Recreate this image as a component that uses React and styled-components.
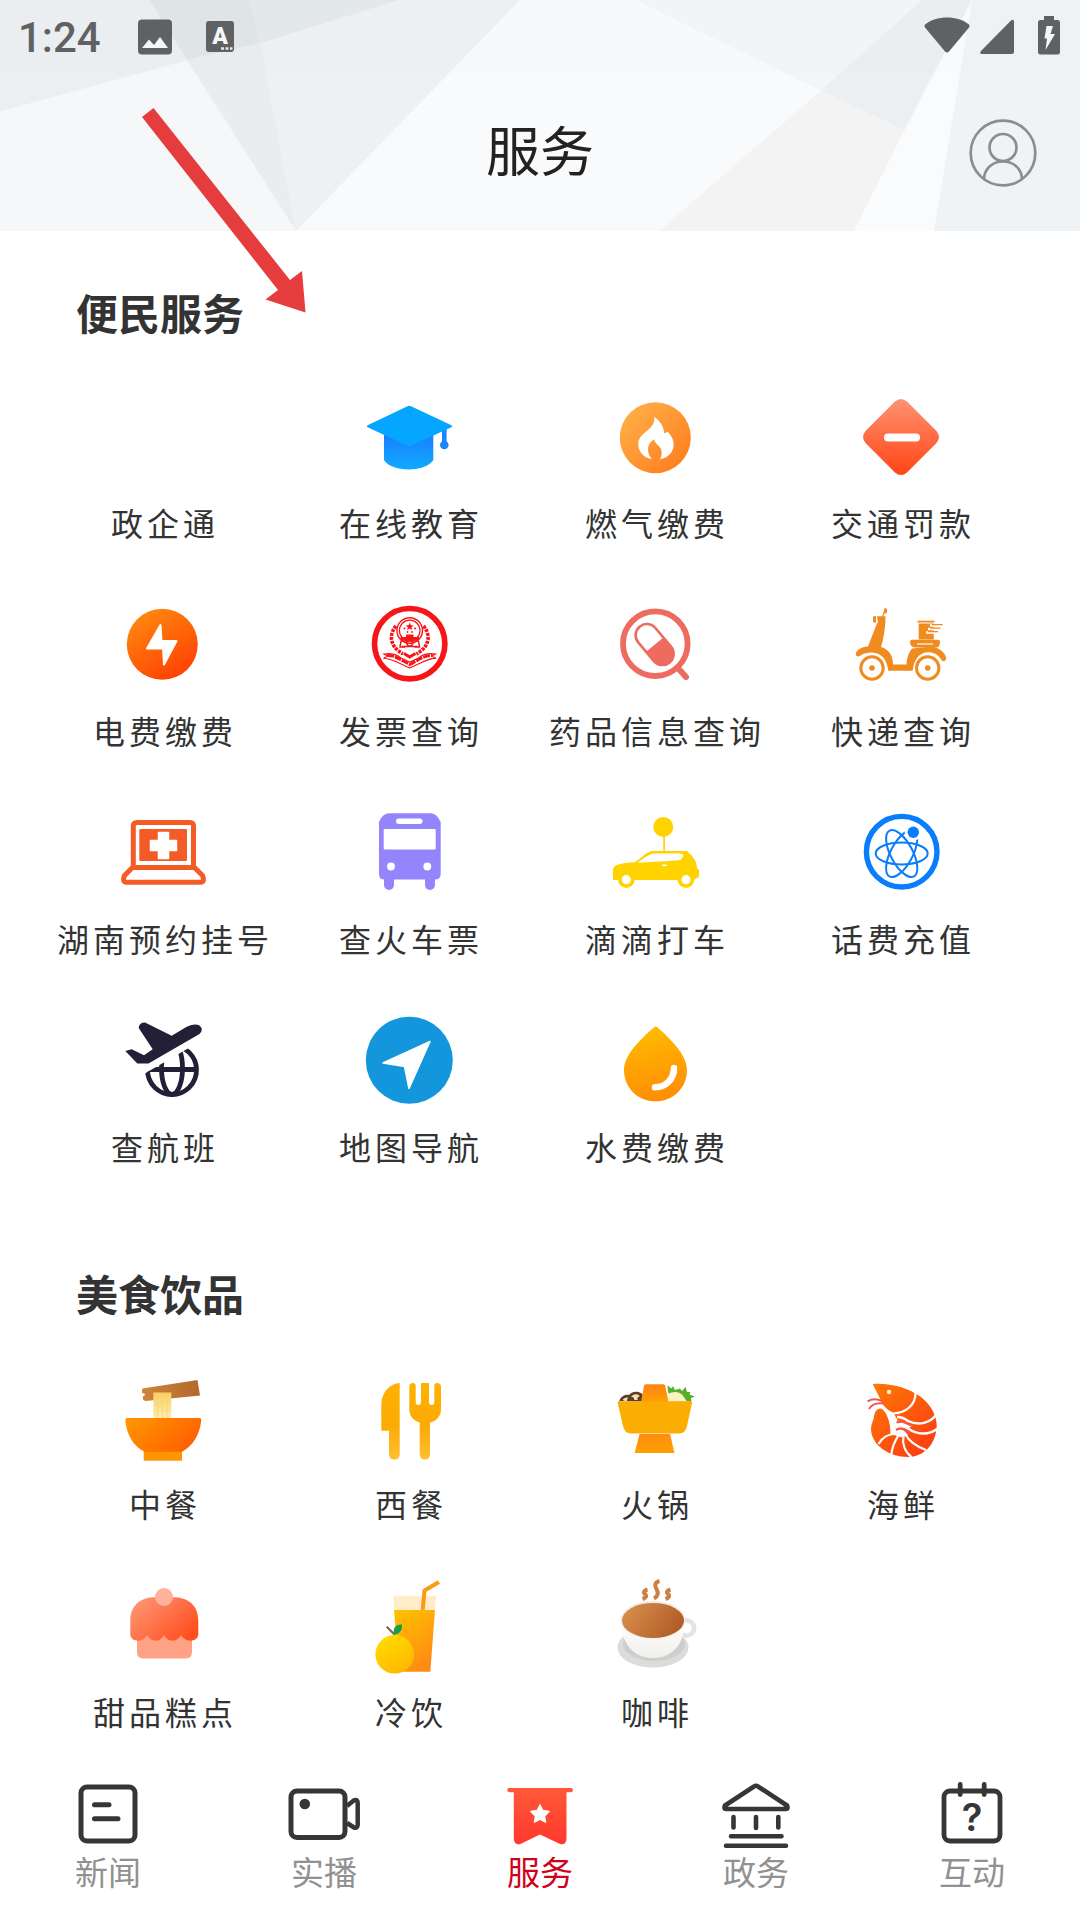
import React, { useState } from 'react';
import styled, { createGlobalStyle } from 'styled-components';

const GlobalStyle = createGlobalStyle`
    * {
        box-sizing: border-box;
    }
    body {
        margin: 0;
        background: #ffffff;
        font-family: 'Noto Sans CJK SC', 'Noto Sans', sans-serif;
        color: #333333;
    }
`

const Page = styled.div`
    display: flex;
    flex-direction: column;
    min-height: 100vh;
`

const Header = styled.header`
    position: relative;
    background: #f8fafc;
`

const HeaderArt = styled.svg`
    position: absolute;
    inset: 0;
    width: 100%;
    height: 100%;
`

const StatusBar = styled.div`
    position: relative;
    display: flex;
    align-items: center;
    justify-content: space-between;
    height: 74px;
    padding: 0 19px 0 18px;
    background: rgba(0, 0, 0, 0.005);
    color: #5f6162;
`

const StatusGroup = styled.div`
    display: flex;
    align-items: center;
    gap: ${props => props.$gap};
`

const Clock = styled.time`
    font-family: Roboto, sans-serif;
    font-size: 42px;
    font-weight: 500;
    line-height: 50px;
    padding-top: 2px;
    width: 86px;
`

const TitleBar = styled.div`
    position: relative;
    display: grid;
    grid-template-columns: 1fr auto 1fr;
    align-items: center;
    height: 157px;
    padding: 0 43px;
`

const Title = styled.h1`
    grid-column: 2;
    margin: 0;
    padding-bottom: 8px;
    font-size: 54px;
    font-weight: 400;
    line-height: 80px;
    color: #222222;
`

const ProfileButton = styled.button`
    justify-self: end;
    display: flex;
    padding: 0;
    border: none;
    background: none;
    color: #8d8d8f;
    cursor: pointer;
`

const Arrow = styled.svg`
    position: absolute;
    top: 100px;
    left: 130px;
    pointer-events: none;
    z-index: 2;
`

const Main = styled.main`
    flex: 1;
    display: flex;
    flex-direction: column;
    gap: 93px;
    padding-top: 51px;
`

const SectionTitle = styled.h2`
    margin: 0 0 50px;
    padding: 0 76px;
    font-size: 42px;
    font-weight: 700;
    line-height: 60px;
`

const Grid = styled.div`
    display: grid;
    grid-template-columns: repeat(4, 1fr);
    row-gap: 54px;
    padding: 0 55px 0 41px;
`

const Service = styled.a`
    display: flex;
    flex-direction: column;
    align-items: center;
    gap: 16px;
    color: inherit;
    text-decoration: none;
    white-space: nowrap;
`

const Icon = styled.svg`
    display: block;
    flex: none;
    width: ${props => props.$size};
    height: ${props => props.$size};
    overflow: visible;
`

const ServiceLabel = styled.span`
    padding-left: 2px;
    font-size: 32px;
    line-height: 48px;
    letter-spacing: 4px;
`

const TabBar = styled.nav`
    position: sticky;
    bottom: 0;
    display: flex;
    padding: 31px 0 28px;
    background: #ffffff;
`

const Tab = styled.button`
    flex: 1;
    display: flex;
    flex-direction: column;
    align-items: center;
    padding: 0;
    border: none;
    background: none;
    font-family: inherit;
    font-size: 33px;
    line-height: 42px;
    color: ${props => props.$active ? '#d0021b' : '#919191'};
    cursor: pointer;
`

/* gradient from (x1,y1) to (x2,y2) in box units */
function Gradient({ id, from, to, x1 = 0, y1 = 0, x2 = 0, y2 = 1 }) {
  return (
    <linearGradient id={id} x1={x1} y1={y1} x2={x2} y2={y2}>
      <stop offset="0" stopColor={from} />
      <stop offset="1" stopColor={to} />
    </linearGradient>
  )
}

const icons = {
  empty: null,
  education: (
    <>
      <Gradient id="cap" from="#1a7bff" to="#0fabff" />
      <path d="M19 40V68C22 73.500 32 77.500 43.700 77.500S65 73.500 68.300 68V40Z" fill="url(#cap)" />
      <path d="M79.300 36V53" stroke="#1a86ff" strokeWidth="4.600" />
      <circle cx="79.300" cy="53" r="4.300" fill="#1a86ff" />
      <path d="M42.500 14.200Q44.300 13.200 46.100 14.200L86.400 33.200Q88 34.200 86.400 35.200L46.100 53.800Q44.300 54.800 42.500 53.800L2.600 35.200Q1 34.200 2.600 33.200Z" fill="#04a6ff" />
    </>
  ),
  gas: (
    <>
      <Gradient id="gas" from="#ffb54d" to="#ff781a" x2={1} />
      <circle cx="44.3" cy="45.7" r="35.5" fill="url(#gas)" />
      <path d="M43.3 24.7C49 29 53 34 53 41C54.5 41 55.5 40.4 56.5 39.4C60 43 62.7 47.5 62.7 52.5C62.7 60 57 66 49 67.3C51.5 63 51.5 57 47.3 53.5C45 51.5 43.5 50 43 47.3C39.5 49.5 37 53 37 57.5C37 61.5 38.5 64.5 41 67.3C33 66 27.3 60 27.3 52C27.3 42 38 40 42 32C43.4 29.5 43.5 27 43.3 24.7Z" fill="#fff" />
    </>
  ),
  traffic: (
    <>
      <linearGradient id="fine" gradientUnits="userSpaceOnUse" x1="44" y1="7" x2="44" y2="83">
        <stop offset="0" stopColor="#ff9272" />
        <stop offset="1" stopColor="#ff4514" />
      </linearGradient>
      <path d="M38 9.5Q44 4.5 50 9.5L79.5 39Q84.5 45 79.5 51L50 80.5Q44 85.5 38 80.5L8.5 51Q3.5 45 8.5 39Z" fill="url(#fine)" />
      <rect x="27" y="41.5" width="36" height="8" rx="4" fill="#fff" />
    </>
  ),
  power: (
    <>
      <Gradient id="power" from="#ff8a10" to="#ff3d03" x1={0.2} x2={0.8} />
      <circle cx="43.3" cy="44.3" r="35.5" fill="url(#power)" />
      <path d="M41.5 25L42.500 41H57.500L45 64.500L44 48.500H28Z" fill="#fff" stroke="#fff" strokeWidth="2" strokeLinejoin="round" />
    </>
  ),
  invoice: (
    <g fill="none" stroke="#f8151a">
      <circle cx="44.7" cy="43.7" r="35.2" strokeWidth="5.6" />
      <circle cx="44.7" cy="30.5" r="12.8" strokeWidth="1.4" />
      <circle cx="44.7" cy="30.5" r="10.3" strokeWidth="1.2" />
      <path d="M44.7 22.5L45.9 25.3L48.7 25.5L46.5 27.3L47.3 30L44.7 28.5L42.1 30L42.9 27.3L40.7 25.5L43.5 25.3Z" fill="#f8151a" stroke="none" />
      <g fill="#f8151a" stroke="none">
        <circle cx="39.5" cy="28.5" r="1" />
        <circle cx="50" cy="28.5" r="1" />
        <circle cx="42.5" cy="32" r="0.9" />
        <circle cx="47" cy="32" r="0.9" />
        <path d="M41 34.5H48.5V37H54V40.500H35.500V37H41Z" />
      </g>
      <path d="M36 41H53.5M37 46.5H52.5" strokeWidth="1.6" />
      <circle cx="44.7" cy="43" r="3" strokeWidth="1.4" />
      <path d="M36 41L35 47H40M53.5 41L54.5 47H49.5" strokeWidth="1.5" />
      <path d="M31 26C24 34 24 46 38 54M58.5 26C65.5 34 65.5 46 51.5 54" strokeWidth="3.6" strokeDasharray="3 1" />
      <path d="M39 53.5L44.7 57L50.5 53.5" strokeWidth="3" />
      <path d="M19 54C26 53 31 54 36 58L44.7 62L53.5 58C58 54 63 53 70.5 54L67 56L71 58.500C64 58 58 62 44.7 68C31 62 26 58 18.5 58.500L22.5 56Z" strokeWidth="1.2" />
      <path d="M22 55.500C30 55 36 60 44.7 64.500C53 60 60 55 67.500 55.500" strokeWidth="3" strokeDasharray="7 1" />
    </g>
  ),
  medicine: (
    <>
      <g stroke="#ee6b60" fill="none">
        <circle cx="44.3" cy="43.7" r="32.3" strokeWidth="5.8" />
        <path d="M66.5 67.5L75 77" strokeWidth="6" strokeLinecap="round" />
      </g>
      <g transform="rotate(50 43.7 44.3)">
        <path d="M44 33.3H56a11.2 11.2 0 0 1 0 22.4H44Z" fill="#ee6b60" />
        <rect x="20.5" y="33.3" width="46.7" height="22.4" rx="11.2" fill="none" stroke="#ee6b60" strokeWidth="2.6" />
      </g>
    </>
  ),
  express: (
    <g fill="#f08b1f">
      <g fill="none" stroke="#f08b1f">
        <circle cx="15" cy="68" r="11.2" strokeWidth="3" />
        <circle cx="70.7" cy="68" r="11.2" strokeWidth="3" />
        <path d="M25.5 17L28 10" strokeWidth="1.2" />
      </g>
      <circle cx="15" cy="68" r="2.8" />
      <circle cx="70.7" cy="68" r="2.8" />
      <ellipse cx="28.5" cy="10.7" rx="1.7" ry="2.8" />
      <path d="M16 16.5L19 16V23L16 22Z" />
      <path d="M20 16.3H28.5C28.5 26 27 38 24 47C32 49 36 56 36 64.5H49.5C50 57 52 52 55 48.5L75 46.5C83 48 88.5 53 89.3 58.5Q87.5 63 84.5 60C81 54 76 52 70 52.3C62 53 57 60 55.7 70.7H31.3C30 60 25 53 15 52.5C9 52 5 54.5 1.5 56.5Q-2 56.5 -1 52.5C1 49 6 46.5 11 46.5L19.5 24.5L21 22Z" />
      <path d="M55 39.7H81Q83.5 40 83 43Q82.5 47.5 79 47.5H58Q53.5 47 53 42.5Q53 39.7 55 39.7Z" />
      <path d="M60 44H76" stroke="#fff" strokeWidth="1.2" />
      <rect x="60.5" y="20.7" width="17" height="1.8" />
      <rect x="61.7" y="23.5" width="15" height="16" />
      <path d="M73 25.5H86M71 29H84M69 32.500H80" stroke="#fff" strokeWidth="2.400" />
      <path d="M75 24.7H85.7M73 28.2H83.5M71 31.7H81" stroke="#f08b1f" strokeWidth="1.3" />
    </g>
  ),
  hospital: (
    <g fill="none" stroke="#f45c27" strokeWidth="5" strokeLinejoin="round">
      <path d="M14.3 58V18Q14.3 14.5 18 14.5H71Q74.5 14.5 74.5 18V58" />
      <path d="M13.5 59.5H75.5L83.5 67.5Q86 73.7 82 74.2H7Q3 73.7 5.5 67.5Z" />
      <rect x="20.3" y="21" width="47.7" height="32" rx="1" fill="#f45c27" stroke="none" />
      <path d="M39.5 24.5H49.5V32.5H57.5V42.5H49.5V50.5H39.5V42.5H31.5V32.5H39.5Z" fill="#fff" stroke="#fff" strokeWidth="1.5" />
    </g>
  ),
  train: (
    <>
      <g fill="#9585fc">
        <path d="M24 5.3H66Q72 6 75.7 14V66Q75.7 71.5 70 71.5H19Q14 71.5 14 66V14Q17 6 24 5.3Z" />
        <rect x="19" y="62" width="10" height="20" rx="5" />
        <rect x="60" y="62" width="10" height="20" rx="5" />
      </g>
      <g fill="#fff">
        <rect x="31" y="10.5" width="26.5" height="5.5" rx="2.7" />
        <rect x="18.7" y="21" width="52" height="20.5" rx="1" />
        <circle cx="26" cy="58.5" r="3.9" />
        <circle cx="62.3" cy="58.5" r="3.9" />
      </g>
    </>
  ),
  taxi: (
    <>
      <g fill="#ffd200">
        <circle cx="52.3" cy="19" r="10" />
        <rect x="52.3" y="28" width="1.6" height="16" />
        <path d="M2 72V62C2 57 9 55 24 54.3C31 49 36 44 41 43H76L78 45C83 49 86 55 86 60L88 62V69L84 71Q75 80 66 72H24Q15 80 7 72Z" />
        <circle cx="15.3" cy="71.7" r="8.2" />
        <circle cx="75" cy="71.7" r="8.2" />
      </g>
      <g fill="#fff">
        <path d="M26.5 54.8C33 50 38 46 43 45.5H68Q72.5 45.5 72.3 47.5C71 51 70 52 66 52.5C50 53.5 38 54 26.5 54.8Z" />
        <circle cx="15.3" cy="71.7" r="4.6" />
        <circle cx="75" cy="71.7" r="4.6" />
        <rect x="51" y="56.5" width="5" height="1.5" rx="0.7" />
      </g>
    </>
  ),
  phone: (
    <g fill="none" stroke="#0a7dfd">
      <circle cx="44.7" cy="43.7" r="35.3" strokeWidth="5.4" />
      <g strokeWidth="2">
        <ellipse cx="44.7" cy="45.5" rx="26" ry="11" />
        <ellipse cx="44.7" cy="45.5" rx="26" ry="11" transform="rotate(62 44.7 45.5)" />
        <ellipse cx="44.7" cy="45.5" rx="26" ry="11" transform="rotate(-62 44.7 45.5)" />
      </g>
      <circle cx="56.3" cy="24.3" r="8.5" fill="#fff" stroke="none" />
      <circle cx="56.3" cy="24.3" r="5.7" fill="#0a7dfd" stroke="none" />
    </g>
  ),
  flight: (
    <>
      <clipPath id="globe">
        <path d="M0 72.6L90 20.3V90H0Z" />
      </clipPath>
      <path d="M26 6.5L52.7 19.7L67.7 10.7Q76 7 80.5 9.5Q85 13.5 80.5 18L29.5 47.5H18.3L6.3 35L12.7 33.3L25 39.3L33.7 33.3L19.7 12Q20 6.5 26 6.5Z" fill="#231f36" />
      <g fill="none" stroke="#231f36" strokeWidth="4.8" clipPath="url(#globe)">
        <circle cx="53" cy="54" r="24.5" />
        <ellipse cx="53" cy="52" rx="10.5" ry="26.5" />
        <path d="M28 53.5H78" />
      </g>
    </>
  ),
  map: (
    <>
      <circle cx="44.3" cy="44.3" r="43.5" fill="#1496dc" />
      <path d="M65 25.5L18 47L39.5 50.5L44 72.5Z" fill="#fff" stroke="#fff" strokeWidth="1.5" strokeLinejoin="round" />
    </>
  ),
  water: (
    <>
      <Gradient id="water" from="#ffbf00" to="#ff8f05" x2={0.2} />
      <path d="M42.5 11.7Q44.7 9.5 47 11.7C58 22 76 38 76 54C76 72 62 85.3 44.5 85.3S13 72 13 54C13 38 31 22 42.5 11.7Z" fill="url(#water)" />
      <path d="M63 52C63 63 55 71 44 71.3" fill="none" stroke="#fff" strokeWidth="6.5" strokeLinecap="round" />
    </>
  ),
  chinese: (
    <>
      <Gradient id="stick" from="#cf843a" to="#b4682c" x2={1} y2={0} />
      <Gradient id="bowl" from="#ff9800" to="#ff6200" x2={1} y2={0.5} />
      <Gradient id="noodle" from="#fbcf62" to="#fdeeb0" />
      <path d="M23.5 15.5L78.5 7L81 22.5L26.5 28Q23 27 24 23.5L26.500 21.500L22.7 19.5Z" fill="url(#stick)" />
      <rect x="34.3" y="19.5" width="18" height="26" fill="url(#noodle)" />
      <path d="M38.5 20V45M43.3 20V45M48 20V45" stroke="#f8cd6a" strokeWidth="0.6" />
      <rect x="24.7" y="76" width="38.3" height="11.7" fill="#ff9500" />
      <path d="M8 45H80.5Q82.5 45 82.3 47C81 62 73 74 63 78.7H25.5C15 74 7.5 62 6.3 47Q6.3 45 8 45Z" fill="url(#bowl)" />
    </>
  ),
  western: (
    <>
      <linearGradient id="cutlery" gradientUnits="userSpaceOnUse" x1="0" y1="10" x2="0" y2="87">
        <stop offset="0" stopColor="#ffb200" />
        <stop offset="0.55" stopColor="#fcaa05" />
        <stop offset="1" stopColor="#ffc033" />
      </linearGradient>
      <g fill="url(#cutlery)">
        <path d="M34.7 10V81Q34.7 86.5 29.3 86.5T24 81V57.7H16.3V30.3C17 19 25 10.5 34.7 10Z" />
        <path d="M44.3 14Q44.3 10 48 10Q50.7 10 50.7 13V29Q50.7 32 53.4 32T56 29V10H64V29Q64 32 66.7 32T69.300 29V13Q69.300 10 72 10Q76 10 76 14V37C76 43 71 48.5 65 49.5V81Q65 86.5 60 86.5T54.7 81V49.5C49 48 44.3 43 44.3 37Z" />
      </g>
    </>
  ),
  hotpot: (
    <>
      <Gradient id="pot" from="#ff8412" to="#fda003" />
      <Gradient id="potBase" from="#ff8c12" to="#ffa200" />
      <path d="M8.3 28C10 22 16 21 18 22C22 17 31 18 33 24L32 28.5Z" fill="#5d4023" />
      <path d="M20 23.5Q25 19.5 29 23L26.5 24.5V27H23.5L22.5 24.5ZM11.5 27Q13 24 17 24.5L15.500 28.5Z" fill="#f5dfc4" />
      <path d="M57 19L56.5 12.500L60.500 15.500L62 13L64 17L69 15.5L71 18L74.5 14L76 19L79.5 19L78.5 21.5L84 23.500L80 25L80.5 28.5H62Z" fill="#57b02c" />
      <path d="M56.500 21Q65 17 71 21.500L76 28.5H56Z" fill="#fcf3c5" />
      <path d="M35 11.3H52.5Q54 11.3 54.3 13L57.5 29H30L33 13Q33.3 11.3 35 11.3Z" fill="url(#pot)" />
      <path d="M7.5 28.3H80.3Q81.3 28.5 81 30L76 53Q74.5 60.5 68 60.5H20.5Q13.5 60.5 12 53L6.7 30Q6.5 28.5 7.5 28.3Z" fill="#fbad03" />
      <path d="M28.5 61H59L63.5 80H23.7Z" fill="url(#potBase)" />
    </>
  ),
  seafood: (
    <>
      <Gradient id="shrimp" from="#ff7a05" to="#fb3a14" x2={0.9} />
      <path d="M15.7 11C32 9.5 52 15 64 24C74 32 80 43 79.7 53C79 72 66 84 51 84C32 84 15 72 14 57C14 50 17 47 17 43C18 37 22 34 25 36C31 41 33.5 51 34 61C38 62 41 63.5 46 64.5C42 60 39 55 38.5 46L34.7 39.5C28 35 25 31 23 25.5Z" fill="url(#shrimp)" />
      <path d="M24 32C31 40 34 51 33.5 61L46 64L51 62C46 56 41 53 40 46L36 39.5C31 38 27 35 24 32Z" fill="#fff" />
      <g fill="none" stroke="#fff" strokeWidth="2.2">
        <path d="M58.5 19C59 31 50 40 36 40.5" />
        <path d="M79 42C73 50 62 53 51 48Q46 44 40 44" strokeWidth="2.4" />
        <path d="M80 56C71 63 59 61 52 56Q45 51 40 55" strokeWidth="2.4" />
        <path d="M69 77C58 73 52 68 48 61" />
        <path d="M54.5 84C48 79 45 71 46.5 63" />
        <path d="M34.5 81C35 74 38 68 41 63" />
        <path d="M21.5 71C25 65 31 61 38 61" />
      </g>
      <path d="M41 47.500L56 52.500L52 55L40 52Z" fill="#fff" />
      <path d="M39.500 49.500C48 46.5 50 52 56 53M39 57C45 53.5 49 58 53 60" fill="none" stroke="#f4574b" strokeWidth="2.2" />
      <path d="M10.500 28.500Q17 24 26 28.5M12 36Q16 29 27 30.5" fill="none" stroke="#f4574b" strokeWidth="1.8" />
      <circle cx="32" cy="19" r="2.2" fill="#fff3d8" />
    </>
  ),
  dessert: (
    <>
      <Gradient id="cake" from="#ff9c7b" to="#ff4f20" x2={1} y2={0.7} />
      <path d="M18 54H73V71Q73 77.5 66.5 77.5H24.5Q18 77.5 18 71Z" fill="#ffa184" />
      <path d="M36 16.3H54C69 16.3 79.3 24 79.3 40V54Q78.5 59.7 71 59.7Q64 58.5 62 54Q59 59.7 53.5 59.7T45 54Q42 59.7 36.5 59.7T28 54Q25 59.7 19.5 59.7Q12 59.5 11.3 54V40C11.3 24 22 16.3 36 16.3Z" fill="url(#cake)" />
      <circle cx="45" cy="16" r="9" fill="#ffb19b" />
    </>
  ),
  drinks: (
    <>
      <Gradient id="juice" from="#fdc400" to="#ff8c12" x2={0.5} />
      <Gradient id="orange" from="#ffe000" to="#ffb700" x2={0.7} />
      <path d="M28.3 14.7H71L70 30H29Z" fill="#ffedc9" />
      <path d="M29 29H70L65.3 90.7H34Z" fill="url(#juice)" />
      <path d="M57.7 29L59.500 9.500L74 1" fill="none" stroke="#f99d10" strokeWidth="4" strokeLinejoin="round" />
      <circle cx="29.7" cy="73.3" r="19.3" fill="url(#orange)" />
      <path d="M21.7 45.7L29.5 53.5" stroke="#86634a" strokeWidth="2.2" />
      <path d="M29 54C27.5 46 31 43.5 37 43.5C37.5 50 34 53 29 54Z" fill="#14a04a" />
    </>
  ),
  coffee: (
    <>
      <Gradient id="coffee" from="#db9350" to="#b35f28" x2={1} y2={0.4} />
      <Gradient id="cup" from="#ffffff" to="#f1f0ec" />
      <ellipse cx="42" cy="66.5" rx="35.5" ry="20" fill="#dcdcdc" />
      <ellipse cx="43" cy="63" rx="31" ry="17" fill="#cecece" />
      <circle cx="75.5" cy="47" r="7.7" fill="none" stroke="#e3e3e1" strokeWidth="4.6" />
      <path d="M10 39C10 62 22 77 42 77S74 62 74 39Z" fill="url(#cup)" />
      <ellipse cx="42" cy="39" rx="32.3" ry="19" fill="#f0ece5" />
      <ellipse cx="42" cy="39.5" rx="31" ry="17.500" fill="url(#coffee)" />
      <g fill="none" stroke="#cb8144" strokeWidth="4">
        <path d="M36.500 8.500Q31 10 34 13T31.500 18" />
        <path d="M48.500 0Q42 2 45.500 8T43 17.500" />
        <path d="M59.500 8.500Q54 10 57 13T54.500 18" />
      </g>
    </>
  ),
}

const tabIcons = {
  news: (
    <g fill="none" stroke="#363636" strokeWidth="5" strokeLinecap="round">
      <rect x="9" y="9" width="54" height="54" rx="6" />
      <path d="M22.5 26.7H37M22.5 40.7H46" />
    </g>
  ),
  live: (
    <g fill="none" stroke="#363636" strokeWidth="5" strokeLinejoin="round">
      <rect x="3" y="13" width="54" height="46.5" rx="6" />
      <path d="M59 28L66 22.3Q69.7 21 69.7 25V46.5Q69.7 50.5 66 49.5L59 45" strokeWidth="4.5" />
      <circle cx="16.8" cy="26" r="5.3" fill="#363636" stroke="none" />
    </g>
  ),
  service: (
    <>
      <Gradient id="flag" from="#ff5a38" to="#ff382e" />
      <path d="M5.5 10H67Q69 10 69 12T67 14.3H62.5V61Q62 67.5 56 66L36 56.5L16.5 66Q10.5 67.5 9.8 61V14.3H5.5Q3.2 14 3.2 12T5.5 10Z" fill="url(#flag)" />
      <path d="M36 27L38.8 32.5L45 33.5L40.5 38L41.5 44L36 41L30.5 44L31.5 38L27 33.5L33.2 32.5Z" fill="#fff" stroke="#fff" strokeWidth="1.5" strokeLinejoin="round" />
    </>
  ),
  gov: (
    <g fill="none" stroke="#363636" strokeWidth="4.6" strokeLinecap="round" strokeLinejoin="round">
      <path d="M34 8.5Q36 7 38 8.5L67 27.5Q68.5 31 66 31H6Q3.5 31 5 27.5Z" />
      <path d="M13.5 39V49.5M36 39V50M58.3 39V49.5M11 58.3H61.5M6 67.7H66" />
    </g>
  ),
  interact: (
    <>
      <g fill="none" stroke="#363636" strokeWidth="4.8" strokeLinecap="round">
        <rect x="8" y="13" width="56" height="50" rx="6" />
        <path d="M24.2 6.5V16.5M48.2 6.5V16.5" />
      </g>
      <text x="36" y="53" textAnchor="middle" fontFamily="Inter, sans-serif" fontSize="38" fontWeight="600" fill="#363636">?</text>
    </>
  ),
}

const sections = [
  {
    title: '便民服务',
    items: [
      { icon: 'empty', label: '政企通' },
      { icon: 'education', label: '在线教育' },
      { icon: 'gas', label: '燃气缴费' },
      { icon: 'traffic', label: '交通罚款' },
      { icon: 'power', label: '电费缴费' },
      { icon: 'invoice', label: '发票查询' },
      { icon: 'medicine', label: '药品信息查询' },
      { icon: 'express', label: '快递查询' },
      { icon: 'hospital', label: '湖南预约挂号' },
      { icon: 'train', label: '查火车票' },
      { icon: 'taxi', label: '滴滴打车' },
      { icon: 'phone', label: '话费充值' },
      { icon: 'flight', label: '查航班' },
      { icon: 'map', label: '地图导航' },
      { icon: 'water', label: '水费缴费' },
    ],
  },
  {
    title: '美食饮品',
    items: [
      { icon: 'chinese', label: '中餐' },
      { icon: 'western', label: '西餐' },
      { icon: 'hotpot', label: '火锅' },
      { icon: 'seafood', label: '海鲜' },
      { icon: 'dessert', label: '甜品糕点' },
      { icon: 'drinks', label: '冷饮' },
      { icon: 'coffee', label: '咖啡' },
    ],
  },
]

const tabs = [
  { id: 'news', label: '新闻' },
  { id: 'live', label: '实播' },
  { id: 'service', label: '服务' },
  { id: 'gov', label: '政务' },
  { id: 'interact', label: '互动' },
]

function HeaderBackground() {
  return (
    <HeaderArt viewBox="0 0 1080 230" preserveAspectRatio="none" aria-hidden="true">
      <path d="M0 111L187 60L296 230H0Z" fill="#f5f7f9" />
      <path d="M0 0H149L187 60L0 111Z" fill="#ebeff1" />
      <path d="M149 0H250L261 43L187 60Z" fill="#e0e5e8" />
      <path d="M250 0H400L261 43Z" fill="#e4e9eb" />
      <path d="M187 60L261 43L296 230Z" fill="#e9edef" />
      <path d="M261 43L400 0H520L296 230Z" fill="#eff0f3" />
      <path d="M635 0H922L821 90Z" fill="#f4f5f6" />
      <path d="M922 0H972L904 130L821 90Z" fill="#ebeff1" />
      <path d="M821 90L904 130L854 230H659Z" fill="#f3f3f4" />
      <path d="M972 0L934 230H854Z" fill="#fafbfd" />
      <path d="M972 0H1080V230H934Z" fill="#f0f3f5" />
    </HeaderArt>
  )
}

function App() {
  const [activeTab, setActiveTab] = useState('service')

  return (
    <Page>
      <GlobalStyle />
      <Header>
        <HeaderBackground />
        <StatusBar>
          <StatusGroup $gap="34px">
            <Clock>1:24</Clock>
            <svg width="34" height="36" viewBox="0 0 34 36" aria-hidden="true">
              <rect width="34" height="35" y="0.5" rx="4" fill="#5f6162" />
              <path d="M4 29L11 20.5L16 26L22 18L30 29Z" fill="#f4f6f7" />
            </svg>
            <svg width="28" height="36" viewBox="0 0 28 36" aria-hidden="true">
              <rect width="28" height="31" y="2" rx="3" fill="#5f6162" />
              <text x="14" y="24.5" textAnchor="middle" fontFamily="Roboto, sans-serif" fontSize="23" fontWeight="900" fill="#f4f6f7">A</text>
              <path d="M15 29.500H18M19.500 29.500H22.500M24 29.500H26.500" stroke="#e4e8ea" strokeWidth="2.4" />
            </svg>
          </StatusGroup>
          <StatusGroup $gap="10px">
            <svg width="46" height="40" viewBox="0 0 46 40" aria-hidden="true">
              <path d="M1 7.5C12 -2 34 -2 45 7.5Q46 9 45 10.5L25 34.5Q23 36.5 21 34.5L1 10.5Q0 9 1 7.5Z" fill="#5f6162" />
            </svg>
            <svg width="34" height="40" viewBox="0 0 34 40" aria-hidden="true">
              <path d="M31 3.5Q34 1.5 34 5V34.500Q34 37 31.5 37H2Q-1 37 1 34Z" fill="#5f6162" />
            </svg>
            <svg width="37" height="42" viewBox="-1 0 37 42" aria-hidden="true">
              <path d="M19 0H29V4H33Q35 4 35 6.5V36Q35 38.500 32.5 38.500H15.5Q13 38.500 13 36V6.5Q13 4 15 4H19Z" fill="#5f6162" />
              <path d="M21.5 10H28L25.5 18H30L20.5 34L22 22.5H19.5Z" fill="#f4f6f7" />
            </svg>
          </StatusGroup>
        </StatusBar>
        <TitleBar>
          <Title>服务</Title>
          <ProfileButton type="button" aria-label="个人中心">
            <svg width="68" height="68" viewBox="0 0 68 68" fill="none" stroke="currentColor" strokeWidth="2.7">
              <circle cx="34" cy="34" r="32.3" />
              <circle cx="34" cy="28.5" r="13.5" />
              <path d="M15 60V59C16 49 24 42.5 34 42.5S52 49 53 59V60" />
            </svg>
          </ProfileButton>
        </TitleBar>
      </Header>

      <Arrow width="190" height="220" viewBox="130 100 190 220" aria-hidden="true">
        <path d="M142 117L153.5 108L290 280L302 271L305.5 312.5L265.5 299.5L278 290Z" fill="#e53c3d" />
      </Arrow>

      <Main>
        {sections.map(section => (
          <section key={section.title}>
            <SectionTitle>{section.title}</SectionTitle>
            <Grid>
              {section.items.map(item => (
                <Service key={item.label} href="#">
                  <Icon $size="90px" viewBox="0 0 90 90" aria-hidden="true">{icons[item.icon]}</Icon>
                  <ServiceLabel>{item.label}</ServiceLabel>
                </Service>
              ))}
            </Grid>
          </section>
        ))}
      </Main>

      <TabBar>
        {tabs.map(tab => (
          <Tab key={tab.id} type="button" $active={tab.id === activeTab} onClick={() => setActiveTab(tab.id)}>
            <Icon $size="72px" viewBox="0 0 72 72" aria-hidden="true">{tabIcons[tab.id]}</Icon>
            {tab.label}
          </Tab>
        ))}
      </TabBar>
    </Page>
  );
}

export default App;
